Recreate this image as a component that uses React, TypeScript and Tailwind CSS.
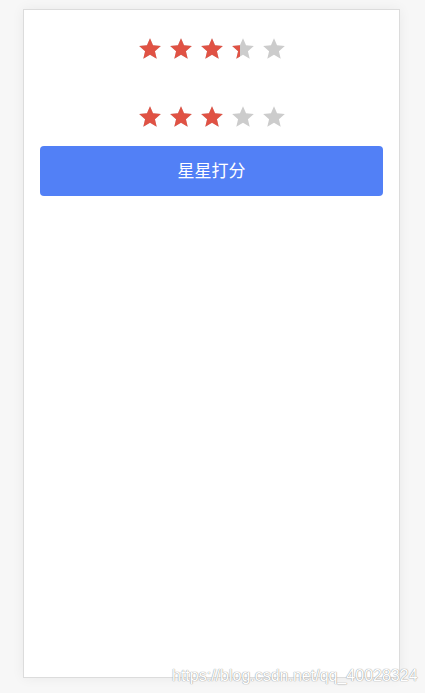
import React from "react";

const STAR = "M12 17.27L18.18 21l-1.64-7.03L22 9.24l-7.19-.61L12 2 9.19 8.63 2 9.24l5.46 4.73L5.82 21z";

function Star({ fill }: { fill: number }) {
  return (
    <div className="relative w-[26px] h-[26px]">
      <svg viewBox="0 0 24 24" className="absolute inset-0 w-[26px] h-[26px]">
        <path d={STAR} fill="#cccccc" />
      </svg>
      {fill > 0 && (
        <div className="absolute left-0 top-0 h-[26px] overflow-hidden" style={{ width: `${fill * 26}px` }}>
          <svg viewBox="0 0 24 24" className="w-[26px] h-[26px]">
            <path d={STAR} fill="#e05244" />
          </svg>
        </div>
      )}
    </div>
  );
}

function Row({ fills }: { fills: number[] }) {
  return (
    <div className="flex justify-center gap-[5px]">
      {fills.map((f, i) => (
        <Star key={i} fill={f} />
      ))}
    </div>
  );
}

export default function App() {
  return (
    <div
      className="relative min-h-[693px] w-[425px] bg-[#f7f7f7] pt-[9px] overflow-hidden"
      style={{ fontFamily: '"Noto Sans CJK SC", "Liberation Sans", sans-serif' }}
    >
      <div className="ml-[23px] w-[377px] h-[669px] bg-white border border-[#dcdcdc] shadow-[0_0_12px_rgba(0,0,0,0.06)]">
        <div className="pt-[26px]">
          <Row fills={[1, 1, 1, 0.4, 0]} />
        </div>
        <div className="pt-[42px]">
          <Row fills={[1, 1, 1, 0, 0]} />
        </div>
        <div className="px-[16px] pt-[16px]">
          <button className="w-full h-[50px] rounded-[4px] bg-[#5280f6] text-white text-[17px] pb-[3px] flex items-center justify-center">
            星星打分
          </button>
        </div>
      </div>
      <div
        className="absolute left-[172px] top-[664px] text-[16px] text-white [text-shadow:0_0_1px_#9a9a9a,0_0_1px_#9a9a9a]"
        style={{ fontFamily: '"Liberation Sans", Arial, sans-serif' }}
      >
        https://blog.csdn.net/qq_40028324
      </div>
    </div>
  );
}
